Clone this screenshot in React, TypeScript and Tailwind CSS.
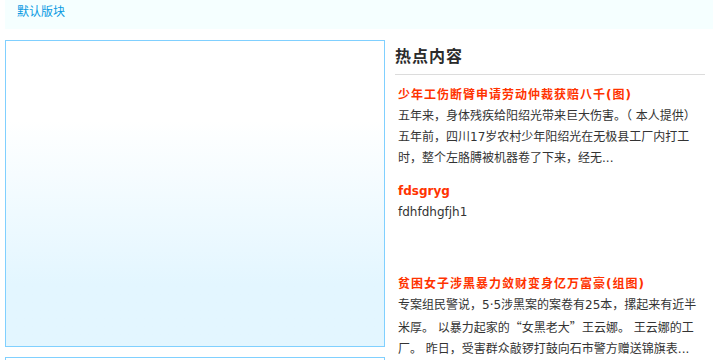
const cjk = "font-['DejaVu_Sans','Noto_Sans_CJK_SC',sans-serif]";

interface NewsItem {
    title: string;
    lines: React.ReactNode[];
    titleCls: string;
    gap: string;
}

const q = (s: string) => <span className="font-['Noto_Sans_CJK_SC',sans-serif]">{s}</span>;

const items: NewsItem[] = [
    {
        title: "少年工伤断臂申请劳动仲裁获赔八千(图)",
        lines: [
            <>五年来，身体残疾给阳绍光带来巨大伤害。（ 本人提供）</>,
            <>五年前，四川17岁农村少年阳绍光在无极县工厂内打工</>,
            <>时，整个左胳膊被机器卷了下来，经无...</>,
        ],
        titleCls: "tracking-[1px]",
        gap: "mb-[12px]",
    },
    {
        title: "fdsgryg",
        lines: [<>fdhfdhgfjh1</>],
        titleCls: "tracking-normal",
        gap: "mb-[9px]",
    },
    {
        title: "贫困女子涉黑暴力敛财变身亿万富豪(组图)",
        lines: [
            <>专案组民警说，5·5涉黑案的案卷有25本，摞起来有近半</>,
            <>米厚。 以暴力起家的{q("“")}女黑老大{q("”")}王云娜。 王云娜的工</>,
            <>厂。 昨日，受害群众敲锣打鼓向石市警方赠送锦旗表...</>,
        ],
        titleCls: "tracking-[1px]",
        gap: "mb-[9px]",
    },
];

function Panel() {
    return (
        <div className="h-[307px] border border-[#80d0ff] bg-linear-to-b from-white from-[26%] to-[#e3f6ff] to-[80%]" />
    );
}

export default function App() {
    return (
        <div className={`w-[713px] h-[360px] overflow-hidden bg-white pl-[5px] ${cjk}`}>
            {/* 顶部栏 */}
            <div className="h-[29px] bg-[#f5ffff] pl-[12px] text-[12px] leading-[24px] text-[#0a9ae2]">
                默认版块
            </div>

            <div className="mt-[11px] flex gap-[10px]">
                {/* 左侧 */}
                <div className="w-[380px] flex flex-col gap-[10px]">
                    <Panel />
                    <Panel />
                </div>

                {/* 热点内容 */}
                <div className="w-[310px]">
                    <h2 className="h-[35px] border-b border-[#dcdcdc] pb-[4px] text-[16px] font-bold leading-[30px] tracking-[1px] text-[#2b2b2b] font-['Noto_Sans_CJK_SC',sans-serif]">
                        热点内容
                    </h2>
                    <div className="pt-[10px]">
                        {items.map((it) => (
                            <div key={it.title} className={`pl-[3px] ${it.gap}`}>
                                <div className={`text-[12px] font-bold leading-[21px] text-[#ff3300] whitespace-nowrap ${it.titleCls}`}>
                                    {it.title}
                                </div>
                                <div className="h-[63px] text-[12px] leading-[21px] text-[#333] whitespace-nowrap">
                                    {it.lines.map((l, i) => (
                                        <div key={i}>{l}</div>
                                    ))}
                                </div>
                            </div>
                        ))}
                    </div>
                </div>
            </div>
        </div>
    );
}
